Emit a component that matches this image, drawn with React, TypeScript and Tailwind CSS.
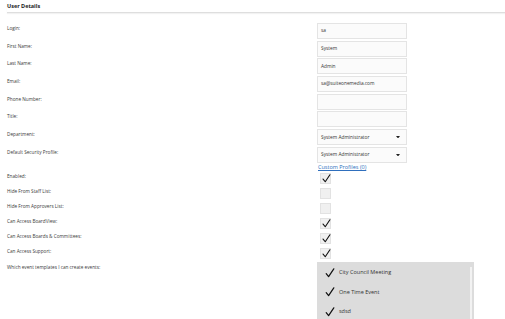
import React from "react";

const font = { fontFamily: '"Open Sans", "Noto Sans", sans-serif' };

function Check({ size = 10 }: { size?: number }) {
  return (
    <svg width={size} height={size} viewBox="0 0 10 10" className="block">
      <path d="M1.2 5.6 L3.6 8.6 L8.8 0.8" fill="none" stroke="#111" strokeWidth="1.2" strokeLinecap="round" strokeLinejoin="round" />
    </svg>
  );
}

function Label({ children, lh }: { children: React.ReactNode; lh: string }) {
  return (
    <div className={`w-[317px] shrink-0 pl-[7px] text-[4.7px] text-[#3a3a3a] ${lh}`}>{children}</div>
  );
}

function Input({ value }: { value?: string }) {
  return (
    <div className="flex h-[16px] w-[90px] items-center border border-[#e4e4e4] bg-[#fbfbfb] pl-[3px] text-[4.8px] text-[#333]">
      {value}
    </div>
  );
}

function Select({ value }: { value: string }) {
  return (
    <div className="flex h-[16px] w-[90px] items-center justify-between border border-[#e4e4e4] bg-[#fbfbfb] pl-[3px] pr-[6px] text-[4.8px] text-[#333]">
      <span>{value}</span>
      <svg width="4" height="2.5" viewBox="0 0 5 3" className="block">
        <path d="M0 0 L5 0 L2.5 3 Z" fill="#222" />
      </svg>
    </div>
  );
}

function Box({ checked }: { checked: boolean }) {
  return (
    <div className="relative ml-[3px] h-[11px] w-[11px] border border-[#e2e2e2] bg-[#f0f0f0]">
      {checked && (
        <div className="absolute left-[1px] top-[0px]">
          <Check size={9} />
        </div>
      )}
    </div>
  );
}

export default function App() {
  const inputs: [string, string][] = [
    ["Login:", "sa"],
    ["First Name:", "System"],
    ["Last Name:", "Admin"],
    ["Email:", "sa@suiteonemedia.com"],
    ["Phone Number:", ""],
    ["Title:", ""],
  ];
  const checks: [string, boolean][] = [
    ["Enabled:", true],
    ["Hide From Staff List:", false],
    ["Hide From Approvers List:", false],
    ["Can Access BoardView:", true],
    ["Can Access Boards & Committees:", true],
    ["Can Access Support:", true],
  ];
  return (
    <div className="h-[319px] w-[505px] overflow-hidden bg-white" style={font}>
      <div className="ml-[7px] h-[13px] border-b border-[#dedede] shadow-[0_1px_1px_rgba(0,0,0,0.05)]">
        <div className="pt-[3px] text-[5.5px] font-bold leading-[7px] text-[#222]">User Details</div>
      </div>
      <div className="mt-[10px] flex flex-col">
        {inputs.map(([l, v]) => (
          <div key={l} className="flex h-[17.7px] items-start">
            <Label lh="leading-[10px]">{l}</Label>
            <Input value={v} />
          </div>
        ))}
        <div className="flex h-[17.7px] items-start">
          <Label lh="leading-[10px]">Department:</Label>
          <Select value="System Administrator" />
        </div>
        <div className="flex h-[26px] items-start">
          <Label lh="leading-[10px]">Default Security Profile:</Label>
          <div className="flex flex-col">
            <Select value="System Administrator" />
            <a className="pl-[1px] text-[5.5px] leading-[8px] text-[#2f6fbd] underline">Custom Profiles (0)</a>
          </div>
        </div>
        {checks.map(([l, c], i) => (
          <div key={l} className={`flex items-start ${i === 5 ? "h-[14px]" : "h-[15px]"}`}>
            <Label lh="leading-[7.5px]">{l}</Label>
            <Box checked={c} />
          </div>
        ))}
        <div className="flex items-start">
          <Label lh="leading-[10px]">Which event templates I can create events:</Label>
          <div className="relative h-[80px] w-[157px] bg-[#dcdcdc]">
            <div className="absolute right-[2px] top-[5px] h-[75px] w-[2px] bg-[#f2f2f2]" />
            <div className="flex flex-col pl-[8px] pt-[1px]">
              {["City Council Meeting", "One Time Event", "sdsd"].map((t) => (
                <div key={t} className="flex h-[19.5px] items-center gap-[4px]">
                  <Check size={10} />
                  <span className="text-[5.5px] text-[#333]">{t}</span>
                </div>
              ))}
            </div>
          </div>
        </div>
      </div>
    </div>
  );
}
